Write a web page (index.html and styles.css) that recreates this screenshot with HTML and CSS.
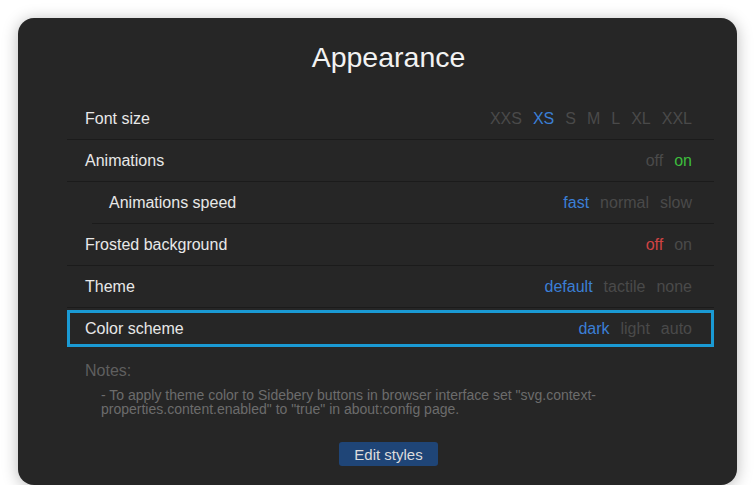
FILE: index.html
```html
<!DOCTYPE html>
<html>
<head>
<meta charset="utf-8">
<link rel="stylesheet" href="styles.css">
</head>
<body>
<div class="card">
  <div class="title">Appearance</div>
  <div class="rows">
    <div class="row">
      <span class="label">Font size</span>
      <span class="opts"><span>XXS</span><span class="blue">XS</span><span>S</span><span>M</span><span>L</span><span>XL</span><span>XXL</span></span>
    </div>
    <div class="row">
      <span class="label">Animations</span>
      <span class="opts"><span>off</span><span class="green">on</span></span>
    </div>
    <div class="row sub">
      <span class="label">Animations speed</span>
      <span class="opts"><span class="blue">fast</span><span>normal</span><span>slow</span></span>
    </div>
    <div class="row">
      <span class="label">Frosted background</span>
      <span class="opts"><span class="red">off</span><span>on</span></span>
    </div>
    <div class="row">
      <span class="label">Theme</span>
      <span class="opts"><span class="blue">default</span><span>tactile</span><span>none</span></span>
    </div>
    <div class="row focused">
      <span class="label">Color scheme</span>
      <span class="opts"><span class="blue">dark</span><span>light</span><span>auto</span></span>
    </div>
  </div>
  <div class="notes">
    <div class="notes-title">Notes:</div>
    <div class="note">- To apply theme color to Sidebery buttons in browser interface set "svg.context-properties.content.enabled" to "true" in about:config page.</div>
  </div>
  <div class="actions"><button class="btn">Edit styles</button></div>
</div>
</body>
</html>
```
FILE: styles.css
```css
html, body {
  margin: 0;
  padding: 0;
  background: #ffffff;
}
body {
  font-family: "Liberation Sans", Arial, sans-serif;
}
.card {
  box-sizing: border-box;
  margin: 18px 0 0 18px;
  width: 719px;
  height: 467px;
  background: #262626;
  border-radius: 16px;
  box-shadow: 0 2px 16px rgba(0, 0, 0, 0.28);
  padding: 22px 23px 0 49px;
  display: flex;
  flex-direction: column;
}
.title {
  font-size: 28.5px;
  line-height: 34px;
  color: #f2f2f2;
  text-align: center;
  padding-right: 4px;
  margin-bottom: 24px;
}
.rows {
  display: flex;
  flex-direction: column;
}
.row {
  box-sizing: border-box;
  height: 42px;
  display: flex;
  align-items: center;
  justify-content: space-between;
  padding: 0 22px 0 18px;
  border-bottom: 1px solid #1b1b1b;
  font-size: 16px;
}
.row.sub {
  margin-left: 25px;
  padding-left: 17px;
}
.row.focused {
  height: 37px;
  margin: 2px 0 3px;
  border: 3px solid #1a9ad4;
  padding: 0 19px 0 15px;
}
.label {
  color: #e8e8e8;
}
.opts {
  display: flex;
  gap: 11px;
  color: #4a4a4a;
}
.blue { color: #3b7fd6; }
.green { color: #3dbd3d; }
.red { color: #cf4343; }
.notes {
  padding-left: 18px;
  margin-top: 11px;
}
.notes-title {
  font-size: 16px;
  line-height: 20px;
  color: #5f5f5f;
}
.note {
  margin-top: 7px;
  padding-left: 16px;
  padding-right: 10px;
  font-size: 14px;
  line-height: 14px;
  color: #6c6c6c;
}
.actions {
  display: flex;
  justify-content: center;
  padding-right: 4px;
  margin-top: 26px;
}
.btn {
  width: 99px;
  height: 24px;
  border: none;
  border-radius: 3px;
  background: #1f4577;
  color: #dcdcdc;
  font-family: "Liberation Sans", Arial, sans-serif;
  font-size: 15px;
  padding: 0;
}
```
